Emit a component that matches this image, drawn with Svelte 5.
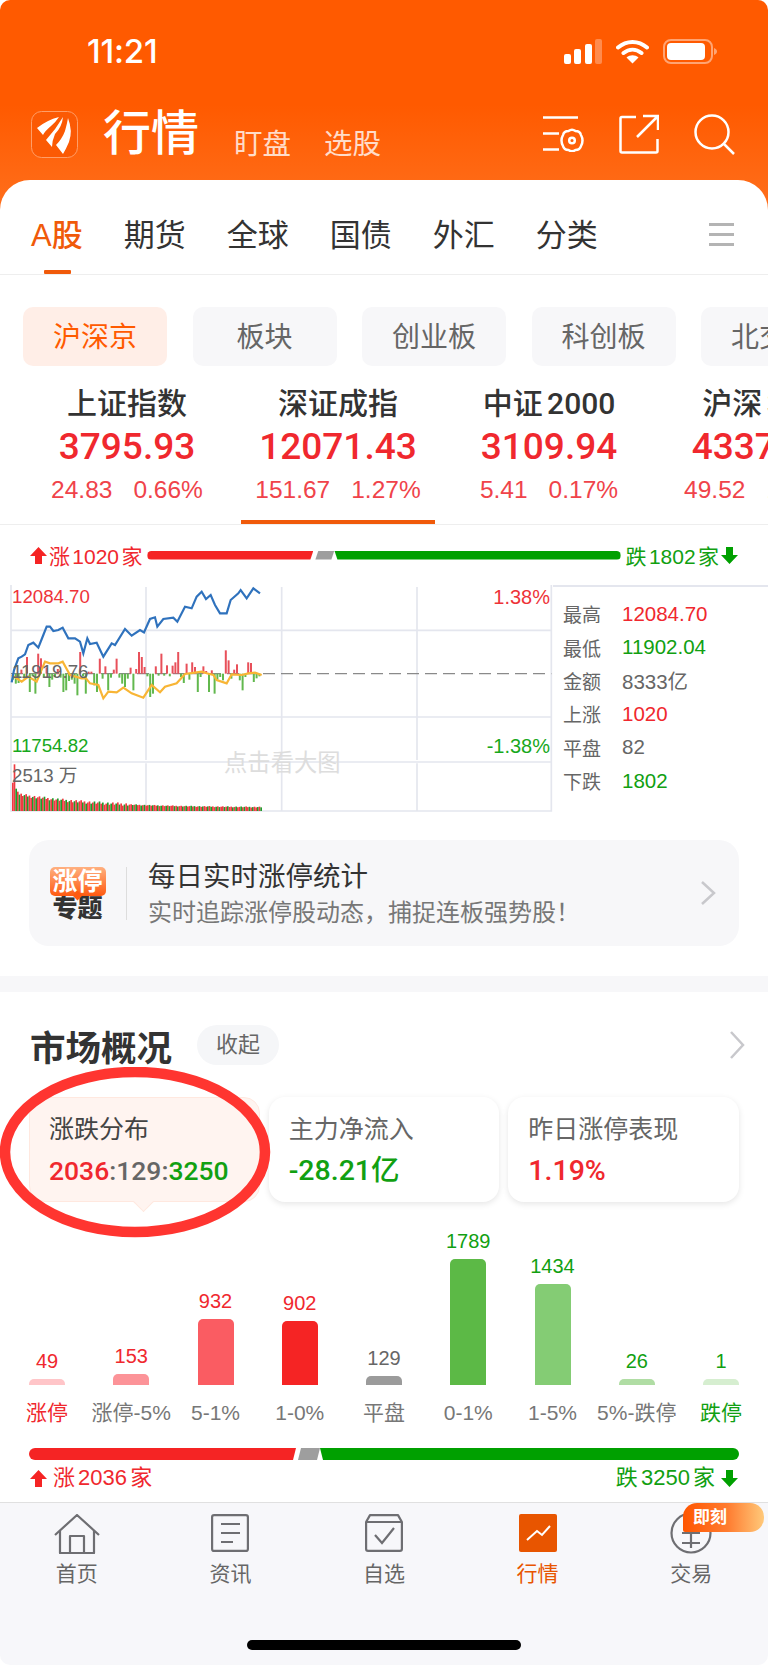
<script>
	const tabs = ['A股', '期货', '全球', '国债', '外汇', '分类'];
	const pills = ['沪深京', '板块', '创业板', '科创板', '北交所'];
	const indices = [
		{ name: '上证指数', value: '3795.93', change: '24.83', pct: '0.66%' },
		{ name: '深证成指', value: '12071.43', change: '151.67', pct: '1.27%', active: true },
		{ name: '中证 2000', value: '3109.94', change: '5.41', pct: '0.17%' },
		{ name: '沪深 300', value: '4337.56', change: '49.52', pct: '1.15%' }
	];
	const stats = [
		{ label: '最高', value: '12084.70', tone: 'up' },
		{ label: '最低', value: '11902.04', tone: 'down' },
		{ label: '金额', value: '8333亿', tone: '' },
		{ label: '上涨', value: '1020', tone: 'up' },
		{ label: '平盘', value: '82', tone: '' },
		{ label: '下跌', value: '1802', tone: 'down' }
	];
	const cards = [
		{ title: '主力净流入', value: '-28.21亿', tone: 'down' },
		{ title: '昨日涨停表现', value: '1.19%', tone: 'up' }
	];
	const dist = [
		{ n: '49', label: '涨停', h: 6, color: '#ffc5c8', tone: 'up', labelTone: 'up' },
		{ n: '153', label: '涨停-5%', h: 11, color: '#fc9398', tone: 'up', labelTone: '' },
		{ n: '932', label: '5-1%', h: 66, color: '#fa5c62', tone: 'up', labelTone: '' },
		{ n: '902', label: '1-0%', h: 64, color: '#f52424', tone: 'up', labelTone: '' },
		{ n: '129', label: '平盘', h: 9, color: '#9b9b9b', tone: '', labelTone: '' },
		{ n: '1789', label: '0-1%', h: 126, color: '#5cb946', tone: 'down', labelTone: '' },
		{ n: '1434', label: '1-5%', h: 101, color: '#84cc74', tone: 'down', labelTone: '' },
		{ n: '26', label: '5%-跌停', h: 6, color: '#b0dda4', tone: 'down', labelTone: '' },
		{ n: '1', label: '跌停', h: 6, color: '#d6eed0', tone: 'down', labelTone: 'down' }
	];
	const navItems = ['首页', '资讯', '自选', '行情', '交易'];

	// chart data, in units of the 3x grid the chart is drawn on
	const priceLine =
		'35,322 42,285 55,250 65,245 75,238 85,210 100,203 115,218 130,180 140,155 150,155 160,168 175,165 188,158 205,190 225,190 240,200 250,235 262,190 270,207 290,203 310,245 335,205 345,210 375,162 395,182 420,165 432,172 450,132 465,127 472,155 490,132 520,128 532,140 555,95 575,100 590,65 605,50 618,72 632,60 645,90 660,115 680,115 692,75 715,55 722,45 740,70 760,40 780,55';
	const avgLine =
		'35,300 50,310 65,320 85,305 110,320 135,260 150,265 175,265 188,260 210,300 245,310 258,310 270,325 295,330 310,370 325,350 350,352 370,338 395,355 430,368 455,330 480,352 495,335 530,325 555,297 590,292 605,290 620,295 640,300 650,315 680,325 695,298 725,300 745,295 765,293 785,300';
	const flow = [
		-18, -30, -28, 12, -14, 50, -55, -8, -60, 60, 46, -12, 18, -40, -18, -10, 14, -12, -55, -50,
		-22, -18, -30, -65, 65, -8, -60, 6, 6, -35, -55, 45, -15, 22, -50, -12, 12, 45, -12, -30, -40,
		-15, 18, -50, 14, 65, 50, 20, -8, -70, -60, 22, -6, 60, -6, 25, -8, 24, 34, 65, -10, -28, 30,
		-18, 34, 20, -55, -10, 22, 8, -55, 10, -60, -18, -10, -20, 70, 40, -15, 12, 28, -20, -50, -10,
		34, 32, -25, -14, -8
	];
	const flowBars = flow.map((v, i) => ({ x: 36 + i * 8.4, v }));
	const volBars = Array.from({ length: 150 }, (_, i) => {
		const wobble = ((i * 37) % 11) - 4;
		const h = i === 1 ? 140 : i < 5 ? 85 - i * 9 : 10 + 42 * Math.exp(-i / 45) + wobble * (i < 70 ? 0.9 : 0.3);
		return { x: 36 + i * 5, h, up: (i * 7) % 5 < 3 };
	});
</script>

{#snippet upArrow()}
	<svg class="arrow" viewBox="0 0 17 17"><path d="M8.5 0 17 9h-5v8H5V9H0z" fill="#f52424" /></svg>
{/snippet}
{#snippet downArrow()}
	<svg class="arrow" viewBox="0 0 17 17"><path d="M8.5 17 17 8h-5V0H5v8H0z" fill="#00a000" /></svg>
{/snippet}

<div class="phone">
	<header class="top">
		<div class="status">
			<span class="time">11:21</span>
			<div class="status-icons">
				<svg width="38" height="25" viewBox="0 0 38 25">
					<rect x="0" y="15" width="7" height="10" rx="2" fill="#fff" />
					<rect x="10" y="10" width="7" height="15" rx="2" fill="#fff" />
					<rect x="21" y="5" width="7" height="20" rx="2" fill="#fff" />
					<rect x="31" y="0" width="7" height="25" rx="2" fill="#fff" opacity="0.3" />
				</svg>
				<svg width="33" height="25" viewBox="0 0 33 25">
					<path d="M2 8.5C10.500 1 22.500 1 31 8.500M7.500 14C13 9.500 20 9.500 25.500 14" fill="none" stroke="#fff" stroke-width="4" stroke-linecap="round" />
					<path d="M16.500 24.500 10.500 18.500C14 15.500 19 15.500 22.500 18.500Z" fill="#fff" />
				</svg>
				<svg width="54" height="25" viewBox="0 0 54 25">
					<rect x="1" y="1" width="48" height="23" rx="7" fill="none" stroke="#fff" stroke-opacity="0.45" stroke-width="2" />
					<rect x="4" y="4" width="38" height="17" rx="4" fill="#fff" />
					<path d="M51 9c2 .8 3 2 3 3.500s-1 2.700-3 3.500z" fill="#fff" opacity="0.45" />
				</svg>
			</div>
		</div>
		<div class="nav">
			<svg class="logo" width="47" height="47" viewBox="0 0 47 47">
				<rect x="0.500" y="0.500" width="46" height="46" rx="10" fill="#fb5a04" stroke="#ff9e68" />
				<path d="M6 17Q16 9 28 6 24 12 20 15 14 20 12 24Z" fill="#fff" />
				<path d="M32 6Q31 16 24 23 21 30 21 36L15 29Q25 18 32 6Z" fill="#fff" />
				<path d="M37 7Q42 20 38 31 35 38 32 43L25 34Q31 28 34 20 36 13 37 7Z" fill="#fff" />
			</svg>
			<span class="title">行情</span>
			<span class="sub">盯盘</span>
			<span class="sub">选股</span>
			<div class="nav-icons">
				<svg width="41" height="36" viewBox="0 0 41 36" fill="none" stroke="#fff" stroke-width="2.500">
					<path d="M0 1.500H35M0 17.500H16M0 33.500H16" />
					<path d="M25.500 15Q29 12.500 32.500 15 37 15 38 19 41 24.500 38 30 37 34 32.500 34 29 36.500 25.500 34 21 34 20 30 17 24.500 20 19 21 15 25.500 15Z" stroke-linejoin="round" />
					<circle cx="29" cy="24.500" r="2.800" />
				</svg>
				<svg width="40" height="40" viewBox="0 0 40 40" fill="none" stroke="#fff" stroke-width="2.500">
					<path d="M17 3H3Q1.500 3 1.500 4.500V37Q1.500 38.500 3 38.500H37Q38.500 38.500 38.500 37V25" />
					<path d="M18 23 38 3M24 2H39V16" />
				</svg>
				<svg width="41" height="41" viewBox="0 0 41 41" fill="none" stroke="#fff" stroke-width="2.500">
					<circle cx="18" cy="18" r="16.500" />
					<path d="M30 30 40 40" />
				</svg>
			</div>
		</div>
	</header>

	<main class="sheet">
		<div class="tabs">
			{#each tabs as tab, i}
				<span class="tab" class:active={i === 0}>{tab}</span>
			{/each}
			<span class="tab-menu"><i></i><i></i><i></i></span>
		</div>

		<div class="pills">
			{#each pills as pill, i}
				<span class="pill" class:active={i === 0}>{pill}</span>
			{/each}
		</div>

		<div class="indices">
			{#each indices as item}
				<div class="index" class:active={item.active}>
					<div class="index-name">{item.name}</div>
					<div class="index-value">{item.value}</div>
					<div class="index-change"><span>{item.change}</span><span>{item.pct}</span></div>
				</div>
			{/each}
		</div>

		<div class="breadth">
			{@render upArrow()}
			<span class="up">涨 1020 家</span>
			<div class="ratio thin">
				<i class="seg red" style="width: 166px"></i>
				<i class="seg gray" style="width: 19px"></i>
				<i class="seg green"></i>
			</div>
			<span class="down">跌 1802 家</span>
			{@render downArrow()}
		</div>

		<div class="chart-row">
			<svg class="chart" viewBox="0 30 1659 681" width="553" height="227">
				<g stroke="#e4e6ee" stroke-width="5" fill="none">
					<path d="M33 30V708H1654V30M438 36V555M438 565V708M845 36V555M845 565V708M1251 36V555M1251 565V708" />
					<path d="M33 166H1654M33 426H1654M33 561H1654" />
				</g>
				<path d="M33 296H1654" stroke="#8a8a8a" stroke-width="4" stroke-dasharray="36 18" />
				{#each flowBars as b}
					<rect x={b.x} y={b.v > 0 ? 296 - b.v : 296} width="6" height={Math.abs(b.v)} fill={b.v > 0 ? '#e8505a' : '#62b84e'} />
				{/each}
				<polyline points={avgLine} fill="none" stroke="#f8b535" stroke-width="6.500" />
				<polyline points={priceLine} fill="none" stroke="#2f72bd" stroke-width="6.500" />
				{#each volBars as b}
					<rect x={b.x} y={708 - b.h} width="5" height={b.h} fill={b.up ? '#f03a42' : '#1f9c2c'} />
				{/each}
				<text x="36" y="83" class="t up">12084.70</text>
				<text x="36" y="310" class="t gray">11919.76</text>
				<text x="36" y="532" class="t down">11754.82</text>
				<text x="36" y="622" class="t gray">2513 万</text>
				<text x="1650" y="88" class="t wide up" text-anchor="end">1.38%</text>
				<text x="1650" y="535" class="t wide down" text-anchor="end">-1.38%</text>
				<text x="672" y="587" class="t hint">点击看大图</text>
			</svg>
			<div class="stats">
				{#each stats as s}
					<div class="stat">
						<span class="stat-label">{s.label}</span>
						<span class="stat-value {s.tone}">{s.value}</span>
					</div>
				{/each}
			</div>
		</div>

		<div class="promo">
			<div class="promo-logo">
				<span class="bubble">涨停</span>
				<span class="topic">专题</span>
			</div>
			<div class="promo-text">
				<div class="promo-title">每日实时涨停统计</div>
				<div class="promo-sub">实时追踪涨停股动态，捕捉连板强势股！</div>
			</div>
			<svg class="chevron" width="16" height="24" viewBox="0 0 16 24" fill="none" stroke="#c8c8cc" stroke-width="2.500"><path d="M2 1 14 12 2 23" /></svg>
		</div>

		<div class="band"></div>

		<div class="market-head">
			<h2>市场概况</h2>
			<span class="fold">收起</span>
			<svg class="chevron" width="16" height="28" viewBox="0 0 16 28" fill="none" stroke="#c8c8cc" stroke-width="2.500"><path d="M2 1 14 14 2 27" /></svg>
		</div>

		<div class="cards">
			<div class="card selected">
				<div class="card-title dark">涨跌分布</div>
				<div class="card-ratio"><span class="up">2036</span>:129:<span class="down">3250</span></div>
			</div>
			{#each cards as c}
				<div class="card">
					<div class="card-title">{c.title}</div>
					<div class="card-value {c.tone}">{c.value}</div>
				</div>
			{/each}
			<svg class="circled" width="275" height="172" viewBox="0 0 275 172">
				<ellipse cx="135" cy="85" rx="130" ry="80" fill="none" stroke="#ff3530" stroke-width="10.500" />
			</svg>
		</div>

		<div class="dist">
			{#each dist as d}
				<div class="dist-col">
					<span class="dist-n {d.tone}">{d.n}</span>
					<i class="dist-bar" style="height: {d.h}px; background: {d.color}"></i>
				</div>
			{/each}
		</div>
		<div class="dist-labels">
			{#each dist as d}
				<div class="dist-label {d.labelTone}"><span>{d.label}</span></div>
			{/each}
		</div>

		<div class="ratio thick">
			<i class="seg red" style="width: 267px"></i>
			<i class="seg gray" style="width: 22px"></i>
			<i class="seg green"></i>
		</div>
		<div class="legend">
			<div class="legend-side up">{@render upArrow()}<span>涨 2036 家</span></div>
			<div class="legend-side down"><span>跌 3250 家</span>{@render downArrow()}</div>
		</div>
	</main>

	<nav class="tabbar">
		<div class="tab-items">
			{#each navItems as label, i}
				<div class="tab-item" class:current={i === 3}>
					<div class="tab-icon">
						{#if i === 0}
							<svg width="46" height="40" viewBox="0 0 46 40" fill="none" stroke="#6e6e72" stroke-width="2.200">
								<path d="M1 21 23 1 45 21M6 17V39H40V17M16 39V22H30V39" stroke-linejoin="round" />
							</svg>
						{:else if i === 1}
							<svg width="38" height="38" viewBox="0 0 38 38" fill="none" stroke="#6e6e72" stroke-width="2.200">
								<rect x="1.100" y="1.100" width="35.800" height="35.800" rx="2" />
								<path d="M10 10H29M10 19H29M10 28H22" />
							</svg>
						{:else if i === 2}
							<svg width="38" height="38" viewBox="0 0 38 38" fill="none" stroke="#6e6e72" stroke-width="2.200">
								<path d="M1.100 8 5 1.100H33L36.900 8V35Q36.900 36.900 35 36.900H3Q1.100 36.900 1.100 35ZM1.100 8H36.900" stroke-linejoin="round" />
								<path d="M10 21 17 29 29 14" />
							</svg>
						{:else if i === 3}
							<svg width="38" height="38" viewBox="0 0 38 38">
								<rect width="38" height="38" rx="2" fill="#e85500" />
								<path d="M8 26 18 17 23 21 31 12" fill="none" stroke="#fff" stroke-width="2" />
							</svg>
						{:else}
							<svg width="42" height="40" viewBox="0 0 42 40" fill="none" stroke="#6e6e72" stroke-width="2.200">
								<circle cx="21" cy="19" r="19.500" />
								<path d="M12 19H30M12 29H30M21 12V34" />
							</svg>
						{/if}
					</div>
					<span class="tab-label">{label}</span>
				</div>
			{/each}
		</div>
		<span class="badge">即刻</span>
		<div class="home-bar"></div>
	</nav>
</div>

<style>
	:global(body) {
		margin: 0;
		background: #fff;
	}

	.phone {
		width: 768px;
		height: 1665px;
		overflow: hidden;
		position: relative;
		border-radius: 10px;
		background: #fff;
		font-family: 'Liberation Sans', 'Noto Sans CJK SC', sans-serif;
		color: #333;
	}

	.up {
		color: #f0282e;
	}

	.down {
		color: #11a011;
	}

	/* header */
	.top {
		height: 210px;
		background: linear-gradient(180deg, #ff5a00 0%, #ff5a00 50%, #ff6f1c 100%);
		color: #fff;
	}

	.status {
		height: 102px;
		display: flex;
		align-items: center;
		justify-content: space-between;
		padding: 0 51px 0 87px;
	}

	.time {
		font-family: Inter, sans-serif;
		font-size: 33px;
		font-weight: 500;
		letter-spacing: -0.2px;
	}

	.status-icons {
		display: flex;
		align-items: center;
		gap: 14px;
	}

	.nav {
		height: 64px;
		display: flex;
		align-items: center;
		padding: 0 33px 0 31px;
	}

	.title {
		font-size: 48px;
		font-weight: 500;
		line-height: 64px;
		margin-left: 25px;
		margin-right: 35px;
	}

	.sub {
		font-size: 28.500px;
		line-height: 40px;
		margin-top: 20px;
		margin-right: 33px;
		opacity: 0.78;
	}

	.nav-icons {
		margin-left: auto;
		display: flex;
		align-items: center;
		gap: 35px;
	}

	.sheet {
		position: relative;
		margin-top: -30px;
		background: #fff;
		border-radius: 30px 30px 0 0;
	}

	/* market tabs */
	.tabs {
		display: flex;
		padding: 36px 34px 0 31px;
		box-sizing: border-box;
		gap: 41px;
		border-bottom: 1px solid #eee;
		height: 95px;
		position: relative;
	}

	.tab {
		font-size: 31px;
		line-height: 40px;
		color: #333;
		position: relative;
		white-space: nowrap;
	}

	.tab.active {
		color: #f05a0a;
		font-weight: 500;
	}

	.tab.active::after {
		content: '';
		position: absolute;
		left: 13px;
		top: 54px;
		width: 27px;
		height: 4px;
		border-radius: 1px;
		background: #f05a0a;
	}

	.tab-menu {
		margin-left: auto;
		width: 25px;
		display: flex;
		flex-direction: column;
		gap: 7px;
		padding-top: 7px;
	}

	.tab-menu i {
		height: 3px;
		background: #b4b4b4;
	}

	/* sub market pills */
	.pills {
		display: flex;
		gap: 25.500px;
		padding-left: 23px;
		margin-top: 32px;
		overflow: hidden;
	}

	.pill {
		flex: 0 0 144px;
		height: 59px;
		line-height: 62px;
		text-align: center;
		font-size: 28px;
		color: #666;
		background: #f7f7f9;
		border-radius: 10px;
		white-space: nowrap;
		overflow: hidden;
	}

	.pill.active {
		color: #ff5a00;
		background: #ffeee7;
	}

	/* index row */
	.indices {
		display: flex;
		gap: 17px;
		padding-left: 30px;
		overflow: hidden;
		border-bottom: 1px solid #eee;
	}

	.index {
		flex: 0 0 194px;
		height: 158px;
		box-sizing: border-box;
		padding-top: 19px;
		text-align: center;
		border-bottom: 4px solid transparent;
		white-space: nowrap;
	}

	.index.active {
		border-bottom-color: #f05a0a;
	}

	.index-name {
		font-family: Roboto, 'Noto Sans CJK SC', sans-serif;
		font-size: 30px;
		font-weight: 500;
		line-height: 38px;
		word-spacing: -3px;
		color: #333;
	}

	.index-value {
		font-family: Roboto, 'Noto Sans CJK SC', sans-serif;
		font-size: 37px;
		font-weight: 500;
		line-height: 44px;
		margin-top: 2px;
		color: #f0282e;
	}

	.index-change {
		display: flex;
		justify-content: center;
		gap: 21px;
		margin-top: 6px;
		font-size: 24.500px;
		line-height: 30px;
		color: #f0434a;
	}

	/* advance / decline strip */
	.breadth {
		display: flex;
		align-items: center;
		height: 30px;
		margin: 15px 0;
		padding: 0 30px;
		font-size: 21px;
		word-spacing: -3.500px;
		white-space: nowrap;
	}

	.breadth .arrow {
		margin-right: 2px;
	}

	.breadth .down + .arrow {
		margin: 0 0 0 2px;
	}

	.arrow {
		width: 17px;
		height: 17px;
		flex: none;
	}

	.ratio {
		display: flex;
		gap: 0;
	}

	.ratio.thin {
		flex: 1;
		height: 9px;
		margin: 0 5px;
	}

	.ratio.thick {
		height: 12px;
		margin: 21px 29px 0;
	}

	.seg {
		display: block;
		height: 100%;
	}

	.seg.red {
		background: #f52424;
		border-radius: 6px 0 0 6px;
		clip-path: polygon(0 0, 100% 0, calc(100% - 3px) 100%, 0 100%);
	}

	.seg.gray {
		background: #9e9e9e;
		margin-left: 2px;
		clip-path: polygon(3px 0, 100% 0, calc(100% - 3px) 100%, 0 100%);
	}

	.seg.green {
		flex: 1;
		background: #00a000;
		border-radius: 0 6px 6px 0;
		clip-path: polygon(0 0, 100% 0, 100% 100%, 3px 100%);
	}

	/* intraday chart */
	.chart-row {
		display: flex;
		height: 227px;
	}

	.chart {
		display: block;
		flex: none;
	}

	.t {
		font-family: 'Liberation Sans', 'Noto Sans CJK SC', sans-serif;
		font-size: 56px;
	}

	.t.wide {
		font-size: 60px;
	}

	.t.up {
		fill: #ee3338;
	}

	.t.down {
		fill: #17a81c;
	}

	.t.gray {
		fill: #666;
	}

	.t.hint {
		fill: #ddd;
		font-size: 70px;
	}

	.stats {
		flex: 1;
		padding: 10px 0 0 10px;
		border-top: 2px solid #e4e6ee;
		box-sizing: border-box;
		height: 100%;
	}

	.stat {
		display: flex;
		height: 33.400px;
		align-items: center;
		font-size: 19px;
		color: #666;
	}

	.stat-label {
		width: 59px;
	}

	.stat-value {
		font-size: 20.500px;
	}

	/* promo banner */
	.promo {
		display: flex;
		align-items: center;
		height: 106px;
		margin: 28px 29px 0;
		padding: 0 23px 0 20px;
		background: #f7f7f9;
		border-radius: 20px;
	}

	.promo-logo {
		width: 57px;
		display: flex;
		flex-direction: column;
		align-items: center;
		padding-right: 20px;
		margin-right: 21px;
		border-right: 1px solid #ddd;
	}

	.bubble {
		position: relative;
		width: 56px;
		height: 29px;
		line-height: 29px;
		text-align: center;
		font-size: 25px;
		font-weight: 700;
		color: #fff;
		background: linear-gradient(180deg, #ffb080, #ff5a10);
		border-radius: 5px;
		white-space: nowrap;
	}

	.bubble::after {
		content: '';
		position: absolute;
		left: 24px;
		bottom: -3px;
		width: 7px;
		height: 7px;
		background: #ff5a10;
		transform: rotate(45deg);
	}

	.topic {
		font-size: 25px;
		font-weight: 900;
		line-height: 24px;
		color: #333;
		white-space: nowrap;
	}

	.promo-text {
		padding-top: 3px;
	}

	.promo-title {
		font-size: 27.500px;
		line-height: 36px;
		color: #333;
	}

	.promo-sub {
		font-size: 24px;
		line-height: 36px;
		color: #777;
		white-space: nowrap;
	}

	.chevron {
		margin-left: auto;
		flex: none;
	}

	.band {
		height: 16px;
		margin-top: 30px;
		background: #f7f7f9;
	}

	/* market overview */
	.market-head {
		display: flex;
		align-items: center;
		height: 40px;
		margin-top: 33px;
		padding: 0 23px 0 30px;
	}

	.market-head h2 {
		margin: 0;
		font-size: 35.500px;
		font-weight: 700;
		color: #333;
		white-space: nowrap;
	}

	.fold {
		margin-left: 25px;
		width: 82px;
		height: 40px;
		line-height: 40px;
		text-align: center;
		font-size: 22px;
		color: #666;
		background: #f5f6f8;
		border-radius: 20px;
	}

	.cards {
		position: relative;
		display: flex;
		gap: 9px;
		margin-top: 32px;
		padding: 0 29px;
	}

	.card {
		flex: 1;
		height: 105px;
		box-sizing: border-box;
		padding: 16px 20px 0;
		background: #fff;
		border-radius: 16px;
		box-shadow: 0 2px 6px rgba(0, 0, 0, 0.1);
		white-space: nowrap;
	}

	.card.selected {
		position: relative;
		background: #fff4f0;
		border: 1px solid #ffe8df;
		box-shadow: none;
		padding: 15px 19px 0;
	}

	.card.selected::after {
		content: '';
		position: absolute;
		left: 106px;
		bottom: -8px;
		width: 14px;
		height: 14px;
		background: #fff4f0;
		border-right: 1px solid #ffe8df;
		border-bottom: 1px solid #ffe8df;
		transform: rotate(45deg);
	}

	.card-title {
		font-size: 25px;
		line-height: 32px;
		color: #666;
	}

	.card-title.dark {
		color: #444;
	}

	.card-value {
		font-family: Roboto, 'Noto Sans CJK SC', sans-serif;
		font-size: 28.500px;
		font-weight: 500;
		line-height: 34px;
		margin-top: 9px;
	}

	.card-ratio {
		font-family: Roboto, 'Noto Sans CJK SC', sans-serif;
		font-size: 26.500px;
		font-weight: 500;
		line-height: 34px;
		margin-top: 9px;
		color: #666;
	}

	.circled {
		position: absolute;
		left: 0;
		top: -30px;
		pointer-events: none;
	}

	/* distribution bars */
	.dist {
		display: flex;
		justify-content: space-between;
		align-items: flex-end;
		height: 183px;
		padding: 0 29px;
	}

	.dist-col {
		width: 36px;
		display: flex;
		flex-direction: column;
		align-items: center;
		gap: 5px;
	}

	.dist-n {
		font-size: 20px;
		line-height: 26px;
	}

	.dist-n:not(.up, .down) {
		color: #666;
	}

	.dist-bar {
		display: block;
		width: 36px;
		border-radius: 5px 5px 0 0;
	}

	.dist-labels {
		display: flex;
		justify-content: space-between;
		margin-top: 14px;
		padding: 0 29px;
	}

	.dist-label {
		width: 36px;
		display: flex;
		justify-content: center;
		font-size: 21px;
		line-height: 28px;
		color: #777;
		white-space: nowrap;
	}

	.dist-label.up {
		color: #f0282e;
	}

	.dist-label.down {
		color: #11a011;
	}

	.legend {
		display: flex;
		justify-content: space-between;
		margin-top: 4px;
		padding: 0 30px;
		font-size: 22px;
		line-height: 28px;
		word-spacing: -3px;
		white-space: nowrap;
	}

	.legend-side {
		display: flex;
		align-items: center;
		gap: 6px;
	}

	/* bottom tab bar */
	.tabbar {
		position: relative;
		margin-top: 10px;
		height: 163px;
		box-sizing: border-box;
		padding-top: 11px;
		background: #f7f7fa;
		border-top: 1px solid #e0e0e0;
	}

	.tab-items {
		display: flex;
	}

	.tab-item {
		flex: 1;
		display: flex;
		flex-direction: column;
		align-items: center;
	}

	.tab-icon {
		height: 40px;
	}

	.tab-label {
		margin-top: 7px;
		font-size: 21px;
		line-height: 26px;
		color: #666;
	}

	.tab-item.current .tab-label {
		color: #e85500;
	}

	.badge {
		position: absolute;
		left: 683px;
		top: 0;
		width: 81px;
		height: 29px;
		line-height: 29px;
		box-sizing: border-box;
		padding-left: 10px;
		font-size: 17px;
		font-weight: 700;
		color: #fff;
		background: linear-gradient(90deg, #ff5500, #ff7c30 55%, #ffc97a);
		border-radius: 14px 14px 14px 2px;
	}

	.home-bar {
		width: 274px;
		height: 10px;
		margin: 53px auto 0;
		border-radius: 5px;
		background: #000;
	}
</style>
